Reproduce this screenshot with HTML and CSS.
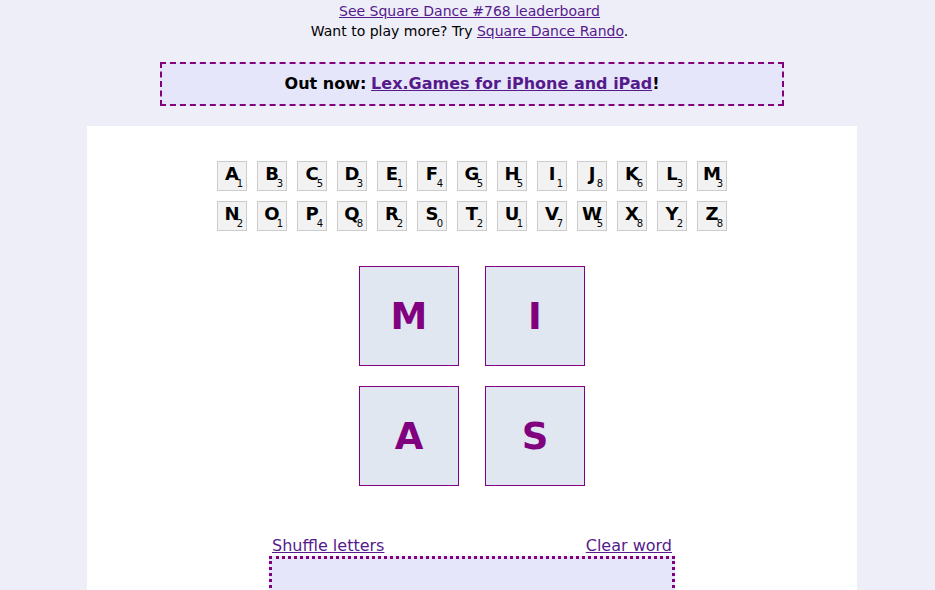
FILE: index.html
```html
<!DOCTYPE html>
<html>
<head>
<meta charset="utf-8">
<title>Square Dance</title>
<link rel="stylesheet" href="styles.css">
</head>
<body>
<div class="page">
  <div class="top-links">
    <div><a href="#">See Square Dance #768 leaderboard</a></div>
    <div>Want to play more? Try <a href="#">Square Dance Rando</a>.</div>
  </div>
  <div class="banner">Out now: <a href="#">Lex.Games for iPhone and iPad</a>!</div>
  <main class="panel">
    <div class="alphabet">
      <div class="tile">A<span class="pts">1</span></div>
      <div class="tile">B<span class="pts">3</span></div>
      <div class="tile">C<span class="pts">5</span></div>
      <div class="tile">D<span class="pts">3</span></div>
      <div class="tile">E<span class="pts">1</span></div>
      <div class="tile">F<span class="pts">4</span></div>
      <div class="tile">G<span class="pts">5</span></div>
      <div class="tile">H<span class="pts">5</span></div>
      <div class="tile">I<span class="pts">1</span></div>
      <div class="tile">J<span class="pts">8</span></div>
      <div class="tile">K<span class="pts">6</span></div>
      <div class="tile">L<span class="pts">3</span></div>
      <div class="tile">M<span class="pts">3</span></div>
      <div class="tile">N<span class="pts">2</span></div>
      <div class="tile">O<span class="pts">1</span></div>
      <div class="tile">P<span class="pts">4</span></div>
      <div class="tile">Q<span class="pts">8</span></div>
      <div class="tile">R<span class="pts">2</span></div>
      <div class="tile">S<span class="pts">0</span></div>
      <div class="tile">T<span class="pts">2</span></div>
      <div class="tile">U<span class="pts">1</span></div>
      <div class="tile">V<span class="pts">7</span></div>
      <div class="tile">W<span class="pts">5</span></div>
      <div class="tile">X<span class="pts">8</span></div>
      <div class="tile">Y<span class="pts">2</span></div>
      <div class="tile">Z<span class="pts">8</span></div>
    </div>
    <div class="board">
      <div class="square">M</div>
      <div class="square">I</div>
      <div class="square">A</div>
      <div class="square">S</div>
    </div>
    <div class="controls">
      <a href="#">Shuffle letters</a>
      <a href="#">Clear word</a>
    </div>
    <div class="word-box"></div>
  </main>
</div>
</body>
</html>
```

FILE: styles.css
```css
html, body {
  margin: 0;
  padding: 0;
}

body {
  background: #eeeef9;
  font-family: "DejaVu Sans", "Liberation Sans", sans-serif;
  color: #000;
  overflow: hidden;
}

.page {
  padding-left: 9px;
  padding-top: 1px;
  display: flex;
  flex-direction: column;
  align-items: center;
}

a {
  color: #551a8b;
  text-decoration: underline;
}

.top-links {
  margin-right: 5px;
  font-size: 14px;
  line-height: 20px;
  text-align: center;
}

.banner {
  margin-top: 21px;
  width: 624px;
  height: 44px;
  box-sizing: border-box;
  border: 2px dashed #800080;
  background: #e6e6fa;
  font-size: 16px;
  font-weight: bold;
  padding-bottom: 2px;
  display: flex;
  align-items: center;
  justify-content: center;
}

.banner a {
  margin-left: 0.3em;
}

.panel {
  margin-top: 20px;
  width: 770px;
  min-height: 500px;
  background: #fff;
  display: flex;
  flex-direction: column;
  align-items: center;
  padding-top: 35px;
}

.alphabet {
  display: grid;
  grid-template-columns: repeat(13, 30px);
  column-gap: 10px;
  row-gap: 10px;
}

.tile {
  position: relative;
  width: 30px;
  height: 30px;
  box-sizing: border-box;
  border: 1px solid #cccccc;
  background: #f2f2f2;
  font-size: 18px;
  font-weight: bold;
  line-height: 24px;
  text-align: center;
}

.pts {
  position: absolute;
  right: 3px;
  bottom: 1px;
  font-size: 10px;
  font-weight: normal;
  line-height: 10px;
}

.board {
  margin-top: 35px;
  display: grid;
  grid-template-columns: 100px 100px;
  column-gap: 26px;
  row-gap: 20px;
}

.square {
  width: 100px;
  height: 100px;
  box-sizing: border-box;
  border: 1px solid #800080;
  background: #e0e7f0;
  color: #800080;
  font-size: 37px;
  font-weight: bold;
  display: flex;
  align-items: center;
  justify-content: center;
}

.controls {
  margin-top: 50px;
  width: 400px;
  display: flex;
  justify-content: space-between;
  font-size: 16px;
  line-height: 19px;
}

.word-box {
  margin-top: 1px;
  width: 406px;
  height: 80px;
  box-sizing: border-box;
  border: 3px dotted #800080;
  background: #e6e6fa;
}
```
